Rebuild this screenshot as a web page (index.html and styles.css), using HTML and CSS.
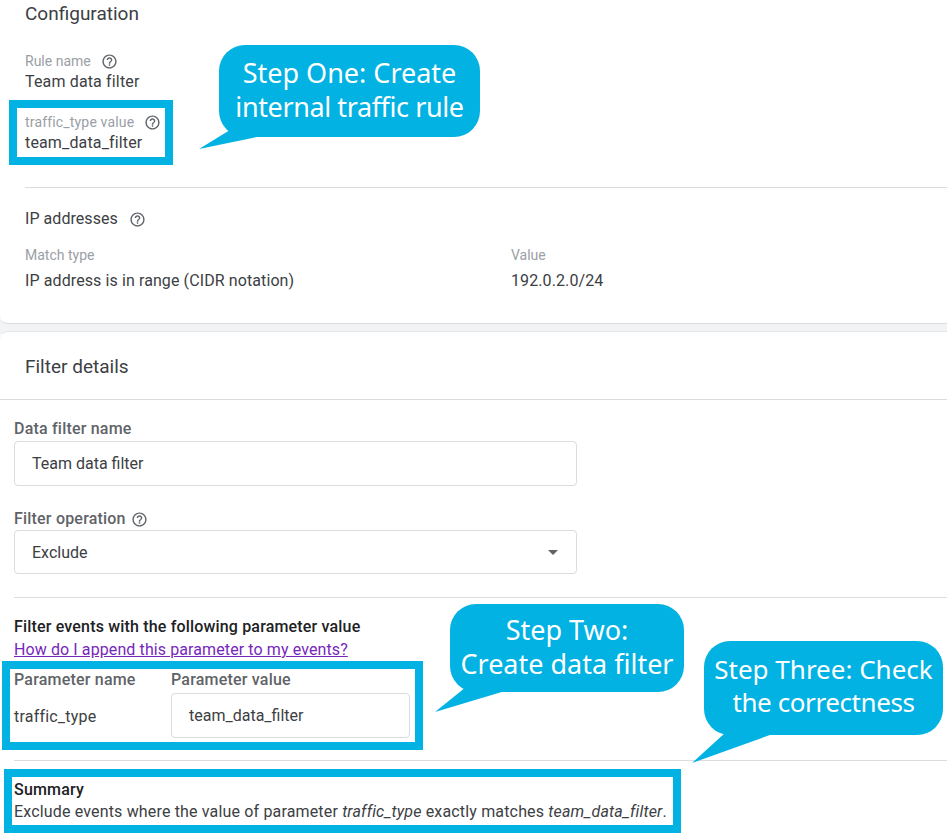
FILE: index.html
```html
<!DOCTYPE html>
<html lang="en">
<head>
  <meta charset="UTF-8">
  <title>Data filter configuration</title>
  <meta name="viewport" content="width=device-width, initial-scale=1.0">
  <link rel="stylesheet" href="styles.css">
</head>
<body>
  <svg class="defs" width="0" height="0" aria-hidden="true">
    <symbol id="help" viewBox="0 0 24 24">
      <path d="M11 18h2v-2h-2v2zm1-16C6.48 2 2 6.48 2 12s4.48 10 10 10 10-4.48 10-10S17.52 2 12 2zm0 18c-4.41 0-8-3.59-8-8s3.59-8 8-8 8 3.59 8 8-3.59 8-8 8zm0-14c-2.21 0-4 1.79-4 4h2c0-1.1.9-2 2-2s2 .9 2 2c0 2-3 1.75-3 5h2c0-2.25 3-2.5 3-5 0-2.21-1.79-4-4-4z"/>
    </symbol>
  </svg>

  <section class="card config">
    <h2 class="card-title">Configuration</h2>
    <div class="field rule-name">
      <div class="field-label">Rule name <svg class="help"><use href="#help"/></svg></div>
      <div class="field-value">Team data filter</div>
    </div>
    <div class="highlight traffic-box">
      <div class="field-label">traffic_type value <svg class="help"><use href="#help"/></svg></div>
      <div class="field-value">team_data_filter</div>
    </div>
    <hr class="rule config-rule">
    <h3 class="ip-title">IP addresses <svg class="help"><use href="#help"/></svg></h3>
    <div class="ip-grid">
      <div class="field">
        <div class="field-label">Match type</div>
        <div class="field-value">IP address is in range (CIDR notation)</div>
      </div>
      <div class="field">
        <div class="field-label">Value</div>
        <div class="field-value">192.0.2.0/24</div>
      </div>
    </div>
  </section>

  <section class="card details">
    <h2 class="details-title">Filter details</h2>
    <div class="form">
      <label class="form-label">Data filter name</label>
      <div class="input">Team data filter</div>
      <label class="form-label op-label">Filter operation <svg class="help"><use href="#help"/></svg></label>
      <div class="input select">Exclude<span class="caret"></span></div>
      <hr class="rule form-rule">
      <h4 class="params-title">Filter events with the following parameter value</h4>
      <a class="link" href="#">How do I append this parameter to my events?</a>
      <div class="highlight params-box">
        <div class="param-head">Parameter name</div>
        <div class="param-head">Parameter value</div>
        <div class="param-name">traffic_type</div>
        <div class="input param-input">team_data_filter</div>
      </div>
      <hr class="rule summary-rule">
      <div class="highlight summary-box">
        <h4 class="summary-title">Summary</h4>
        <p class="summary-text">Exclude events where the value of parameter <em>traffic_type</em> exactly matches <em>team_data_filter</em>.</p>
      </div>
    </div>
  </section>

  <div class="bubble bubble-one">
    <svg class="tail tail-one" width="60" height="20" viewBox="0 0 60 20"><path d="M31 0 L0 19 L58 7 L58 0 Z"/></svg>
    Step One: Create<br><span class="tight">internal traffic rule</span>
  </div>
  <div class="bubble bubble-two">
    <svg class="tail tail-two" width="72" height="26" viewBox="0 0 72 26"><path d="M31 0 L0 25 L70 4 L70 0 Z"/></svg>
    Step Two:<br>Create data filter
  </div>
  <div class="bubble bubble-three">
    <svg class="tail tail-three" width="80" height="32" viewBox="0 0 80 32"><path d="M33 0 L0 30 L78 2 L78 0 Z"/></svg>
    Step Three: Check<br><span class="tight">the correctness</span>
  </div>
</body>
</html>
```

FILE: styles.css
```css
body {
  margin: 0;
  height: 840px;
  overflow: hidden;
  position: relative;
  background: #fff;
  font-family: Roboto, "Liberation Sans", sans-serif;
  font-size: 14px;
  line-height: 20px;
  color: #3c4043;
}
.defs {
  position: absolute;
}
.card {
  background: #fff;
  box-sizing: border-box;
}
.config {
  height: 324px;
  padding: 4px 0 0 25px;
  border-bottom: 1px solid #dadce0;
  border-radius: 0 0 0 8px;
}
.details {
  margin-top: 7px;
  border-top: 1px solid #e3e5e8;
  border-radius: 8px 0 0 0;
  position: relative;
}
body::before {
  content: "";
  position: absolute;
  left: 0;
  right: 0;
  top: 320px;
  height: 14px;
  background: #f1f3f4;
  z-index: -1;
}
.card-title {
  margin: 0 0 27px;
  font-size: 19px;
  font-weight: 400;
  line-height: 20px;
  color: #3c4043;
}
.field-label {
  display: flex;
  align-items: center;
  gap: 10px;
  color: #9aa0a6;
  font-size: 14px;
}
.field-value {
  margin-top: 1px;
  color: #3c4043;
  font-size: 16px;
  letter-spacing: 0.15px;
}
.help {
  width: 17px;
  height: 17px;
  fill: #5f6368;
  flex: none;
}
.highlight {
  border: 8px solid #02b2e2;
  box-sizing: border-box;
  background: #fff;
}
.traffic-box {
  width: 164px;
  height: 65px;
  margin: 8px 0 0 -16px;
  padding: 4px 0 0 8px;
}
.traffic-box .field-label {
  letter-spacing: 0.17px;
}
.rule {
  margin: 0;
  border: 0;
  border-top: 1px solid #dadce0;
}
.config-rule {
  margin-top: 22px;
}
.ip-title {
  display: flex;
  align-items: center;
  gap: 11px;
  margin: 21px 0 0;
  font-size: 16px;
  font-weight: 400;
  letter-spacing: 0.05px;
  color: #3c4043;
}
.ip-grid {
  display: grid;
  grid-template-columns: 486px 1fr;
  margin-top: 16px;
}
.ip-grid .field-value {
  margin-top: 6px;
  letter-spacing: 0.1px;
}
.details-title {
  margin: 0;
  padding: 25px 25px 22px;
  font-size: 19px;
  font-weight: 400;
  line-height: 20px;
  color: #3c4043;
  border-bottom: 1px solid #dadce0;
}
.form {
  padding: 19px 0 0 14px;
}
.form-label {
  display: flex;
  align-items: center;
  gap: 5px;
  font-size: 16px;
  font-weight: 500;
  letter-spacing: 0.2px;
  color: #5f6368;
}
.input {
  box-sizing: border-box;
  width: 563px;
  height: 45px;
  margin-top: 2px;
  padding: 0 17px;
  display: flex;
  align-items: center;
  border: 1px solid #dadce0;
  border-radius: 4px;
  font-size: 16px;
  color: #3c4043;
  background: #fff;
}
.op-label {
  margin-top: 23px;
}
.select {
  height: 44px;
  margin-top: 1px;
  justify-content: space-between;
  padding: 1px 18px 0 17px;
}
.caret {
  width: 0;
  height: 0;
  border-left: 5px solid transparent;
  border-right: 5px solid transparent;
  border-top: 5px solid #5f6368;
}
.form-rule {
  margin-top: 23px;
}
.params-title {
  margin: 19px 0 0;
  font-size: 16px;
  font-weight: 500;
  letter-spacing: 0.17px;
  line-height: 20px;
  color: #202124;
}
.link {
  display: block;
  margin-top: 3px;
  font-size: 16px;
  letter-spacing: 0.1px;
  color: #7627bb;
}
.params-box {
  display: grid;
  grid-template-columns: 157px 1fr;
  align-content: start;
  align-items: center;
  row-gap: 3px;
  width: 421px;
  height: 89px;
  margin: 1px 0 0 -12px;
  padding: 1px 0 0 4px;
}
.param-head {
  font-size: 16px;
  font-weight: 500;
  letter-spacing: 0.2px;
  color: #5f6368;
}
.param-name {
  margin-top: 3px;
  font-size: 16px;
  letter-spacing: 0.2px;
  color: #3c4043;
}
.param-input {
  width: 239px;
  height: 45px;
  margin: 0;
  padding: 0 17px;
  font-size: 16px;
}
.summary-rule {
  margin-top: 10px;
}
.summary-box {
  width: 677px;
  height: 64px;
  margin: 8px 0 0 -10px;
  padding: 3px 0 0 2px;
}
.summary-title {
  margin: 0;
  font-size: 16px;
  font-weight: 500;
  letter-spacing: 0.2px;
  line-height: 20px;
  color: #202124;
}
.summary-text {
  margin: 2px 0 0;
  font-size: 16px;
  letter-spacing: 0.16px;
  line-height: 20px;
  color: #3c4043;
  white-space: nowrap;
}
.bubble {
  position: absolute;
  box-sizing: border-box;
  background: #02b2e2;
  border-radius: 26px;
  color: #fff;
  font-family: "Noto Sans", "Open Sans", sans-serif;
  font-size: 27px;
  line-height: 34px;
  text-align: center;
  white-space: nowrap;
}
.tight {
  letter-spacing: -0.4px;
}
.tail {
  position: absolute;
  fill: #02b2e2;
}
.bubble-one {
  left: 219px;
  top: 45px;
  width: 261px;
  height: 92px;
  padding-top: 11px;
}
.tail-one {
  left: -20px;
  top: 85px;
}
.bubble-two {
  left: 450px;
  top: 604px;
  width: 234px;
  height: 88px;
  padding-top: 9px;
}
.tail-two {
  left: -15px;
  top: 83px;
}
.bubble-three {
  left: 704px;
  top: 641px;
  width: 239px;
  height: 94px;
  padding-top: 12px;
  font-size: 26px;
  line-height: 33px;
}
.tail-three {
  left: -12px;
  top: 92px;
}
```
